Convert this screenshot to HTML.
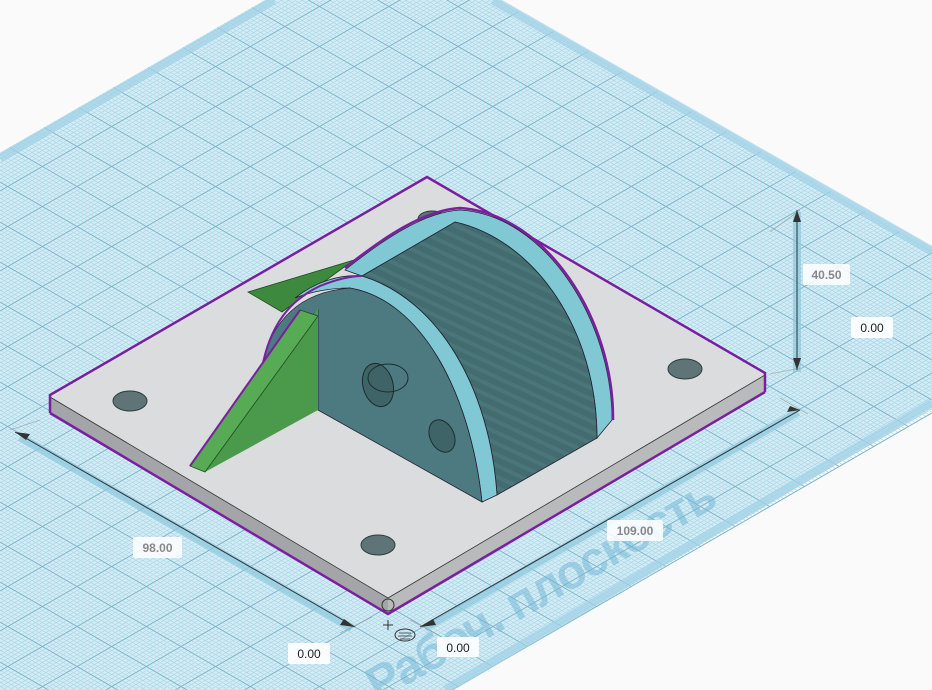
<!DOCTYPE html>
<html><head><meta charset="utf-8"><style>
html,body{margin:0;padding:0;background:#fafafa;width:932px;height:690px;overflow:hidden;position:relative}
svg{display:block;position:absolute;left:0;top:0}
.lbl{font-family:"Liberation Sans",sans-serif;font-size:12px}
</style></head><body>
<svg width="932" height="690" viewBox="0 0 932 690" xmlns="http://www.w3.org/2000/svg">
<defs>
<pattern id="st" width="10" height="10" patternUnits="userSpaceOnUse" patternTransform="rotate(25)">
<rect width="10" height="10" fill="#426c70"/>
<rect width="10" height="4" fill="#4a7579"/>
</pattern>
</defs>
<rect x="0" y="0" width="932" height="690" fill="#fafafa"/>
<polygon points="0,153 267,0 500,0 932,247 932,407 452,690 0,690" fill="#d4ecf5"/>
<g id="gl" fill="none"></g>
<!-- edge bands -->
<g stroke="#9fd2e6" stroke-width="9" opacity="0.7" fill="none">
<path d="M0,158 L274,0"/>
<path d="M493,0 L932,251"/>
<path d="M445,690 L932,403"/>
</g>
<!-- dimension bands -->
<g stroke="#8cc9de" stroke-width="8" opacity="0.7" fill="none">
<path d="M20,437 L352,628"/>
<path d="M425,628 L798,412"/>
<path d="M797,212 L797,372"/>
</g>
<!-- watermark -->
<text x="378" y="702" transform="rotate(-30 378 702)" font-family="Liberation Sans,sans-serif" font-weight="bold" font-size="48" fill="#6fb5d5" opacity="0.5" textLength="395">Рабоч. плоскость</text>
<!-- plate -->
<polygon points="50,397 388,598 388,614 50,413" fill="#a3a5a8"/>
<polygon points="388,598 765,375 765,392 388,614" fill="#b8babc"/>
<polygon points="50,397 427,178 765,375 388,598" fill="#dadcde"/>
<path d="M50,397 L388,598 L765,375" stroke="#333" stroke-width="0.8" fill="none"/>
<path d="M50,413 L50,395 L427,177 L765,373 L765,392 M50,413 L388,614 L765,392" stroke="#7a1fa0" stroke-width="2.5" fill="none"/>
<!-- holes -->
<g fill="#5e7477" stroke="#2e3c3e" stroke-width="1">
<ellipse cx="130" cy="401" rx="17" ry="10"/>
<ellipse cx="378" cy="545" rx="17" ry="10"/>
<ellipse cx="685" cy="369" rx="17" ry="10"/>
<ellipse cx="432" cy="219" rx="14" ry="8"/>
</g>
<!-- back green wing -->
<polygon points="248,292 354,260 282,312" fill="#3d8a3e" stroke="#1f4a20" stroke-width="0.8"/>
<!-- back rim -->
<path d="M345,270 C385,238 425,212 460,210 C545,215 612,320 612,420 L597,438 C597,330 535,240 455,222 L362,276 Z" fill="#7fc8d4" stroke="#223" stroke-width="0.8"/>
<path d="M345,268 C385,236 425,210 460,208 C547,214 614,320 613,420" stroke="#7a1fa0" stroke-width="2.5" fill="none"/>
<!-- cylinder -->
<path d="M362,276 L455,222 C535,240 597,330 597,438 L497,495 C490,390 440,300 362,276 Z" fill="url(#st)" stroke="#223" stroke-width="0.8"/>
<!-- front rim -->
<path d="M295,298 C315,282 340,274 362,276 C440,300 490,390 497,495 L482,502 C470,390 420,300 350,288 C330,288 310,292 295,298 Z" fill="#7fc8d4" stroke="#223" stroke-width="0.8"/>
<!-- front disk -->
<path d="M262,365 C272,320 300,292 350,288 C420,300 470,390 482,502 L318,410 L318,310 Z" fill="#4d7a80" stroke="#223" stroke-width="0.8"/>
<path d="M262,368 C270,325 290,300 320,286 C335,280 350,276 362,276" stroke="#7a1fa0" stroke-width="2" fill="none"/>
<!-- front holes -->
<g fill="#3f6468" stroke="#1c2c2e" stroke-width="1">
<ellipse cx="378" cy="385" rx="15" ry="22" transform="rotate(-15 378 385)"/>
<ellipse cx="388" cy="378" rx="20" ry="14" fill="none"/>
<ellipse cx="442" cy="436" rx="12" ry="17" transform="rotate(-25 442 436)"/>
</g>
<!-- green bracket -->
<polygon points="205,472 318,410 318,308" fill="#4b9a4b"/>
<polygon points="190,466 300,310 318,316 205,472" fill="#58ab55" stroke="#1f4a20" stroke-width="0.8"/>
<path d="M190,466 L300,310" stroke="#7a1fa0" stroke-width="2"/>
<!-- dimension lines -->
<g stroke="#333" stroke-width="1" fill="none">
<path d="M15,432 L355,627"/>
<path d="M420,627 L800,410"/>
<path d="M797,210 L797,370"/>
<path d="M10,430 L40,420 M340,633 L372,617 M410,620 L440,636 M780,398 L808,414 M770,232 L800,210 M770,374 L800,368" stroke="#999" stroke-width="0.6"/>
</g>
<g fill="#333">
<polygon points="15,432 30,434 26,440"/>
<polygon points="355,627 340,625 344,619"/>
<polygon points="420,627 433,619 436,625"/>
<polygon points="800,410 787,412 790,406"/>
<polygon points="797,210 793,222 801,222"/>
<polygon points="797,370 793,358 801,358"/>
</g>
<!-- origin markers -->
<circle cx="388" cy="605" r="6" fill="none" stroke="#333" stroke-width="1"/>
<path d="M383,625 H393 M388,620 V630" stroke="#333" stroke-width="1"/>
<ellipse cx="405" cy="635" rx="10" ry="6" fill="none" stroke="#333" stroke-width="1"/>
<path d="M399,633 H411 M398,636 H412 M400,639 H410" stroke="#333" stroke-width="0.8"/>
<!-- labels -->
<g class="lbl">
<rect x="133" y="537" width="49" height="21" rx="2" fill="#fff" opacity="0.85"/>
<text x="157.5" y="552" text-anchor="middle" fill="#888" font-weight="bold">98.00</text>
<rect x="607" y="520" width="56" height="21" rx="2" fill="#fff" opacity="0.85"/>
<text x="635" y="535" text-anchor="middle" fill="#888" font-weight="bold">109.00</text>
<rect x="803" y="264" width="47" height="21" rx="2" fill="#fff" opacity="0.85"/>
<text x="826.5" y="279" text-anchor="middle" fill="#888" font-weight="bold">40.50</text>
<rect x="851" y="317" width="42" height="21" rx="2" fill="#fff" opacity="0.9"/>
<text x="872" y="332" text-anchor="middle" fill="#222">0.00</text>
<rect x="288" y="643" width="42" height="21" rx="2" fill="#fff" opacity="0.9"/>
<text x="309" y="658" text-anchor="middle" fill="#222">0.00</text>
<rect x="437" y="637" width="42" height="20" rx="2" fill="#fff" opacity="0.9"/>
<text x="458" y="652" text-anchor="middle" fill="#222">0.00</text>
</g>
</svg>
<script>
(function(){
var k=0.5774,NS="http://www.w3.org/2000/svg",g=document.getElementById("gl");
var minor="",major="";
// family A: y = a - k x, a in [153,951]; x <= (a+288)/(2k)
for(var i=0;;i++){var a=153+i*4+2; if(a>951)break;
 var x2=Math.min(932,(a+288)/(2*k)); var x1=Math.max(0,(a-690)/k);
 if(x2<=x1)continue;
 var s="M"+x1.toFixed(1)+","+(a-k*x1).toFixed(1)+"L"+x2.toFixed(1)+","+(a-k*x2).toFixed(1);
 if(((a-605-k*388)%40+40)%40<2||((a-605-k*388)%40+40)%40>38)major+=s;else minor+=s;}
// family B: y = b + k x, b >= -288; x in [(153-b)/2k,(951-b)/2k]
for(var j=0;;j++){var b=-288+j*4+2; if(b>690)break;
 var x1=Math.max(0,(153-b)/(2*k)), x2=Math.min(932,(951-b)/(2*k));
 if(b<0)x1=Math.max(x1,-b/k);
 if(x2<=x1)continue;
 var s="M"+x1.toFixed(1)+","+(b+k*x1).toFixed(1)+"L"+x2.toFixed(1)+","+(b+k*x2).toFixed(1);
 var r=((b-605+k*388)%40+40)%40;
 if(r<2||r>38)major+=s;else minor+=s;}
var p1=document.createElementNS(NS,"path");p1.setAttribute("d",minor);p1.setAttribute("stroke","#a6d4e6");p1.setAttribute("stroke-width","0.6");g.appendChild(p1);
var p2=document.createElementNS(NS,"path");p2.setAttribute("d",major);p2.setAttribute("stroke","#7db5cb");p2.setAttribute("stroke-width","1");g.appendChild(p2);
})();
</script>
</body></html>
